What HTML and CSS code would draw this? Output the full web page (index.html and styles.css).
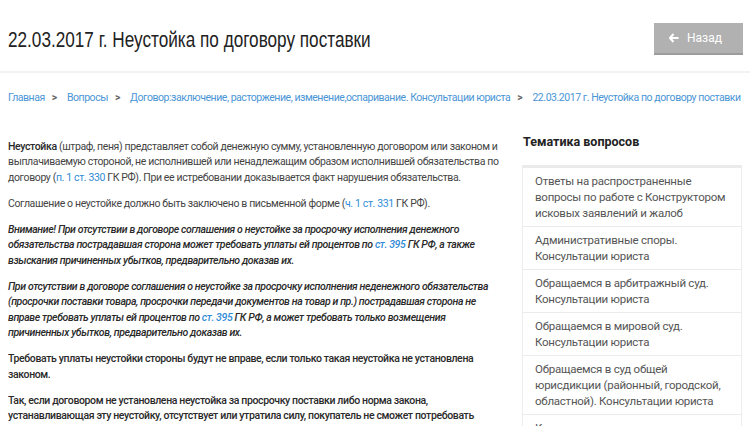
FILE: index.html
```html
<!DOCTYPE html>
<html lang="ru">
<head>
  <meta charset="UTF-8" />
  <meta name="viewport" content="width=device-width, initial-scale=1.0" />
  <title>22.03.2017 г. Неустойка по договору поставки</title>
  <link rel="stylesheet" href="styles.css">
</head>
<body>
  <!-- шапка -->
  <header class="page-header">
    <h1 class="page-title">22.03.2017 г. Неустойка по договору поставки</h1>
    <a href="#" class="back-btn">
      <svg class="back-icon" width="10" height="10" viewBox="0 0 10 10"><path d="M4.5 1L1 5l3.5 4M1 5h8.5" fill="none" stroke="#fff" stroke-width="2"/></svg>
      <span>Назад</span>
    </a>
  </header>

  <nav class="breadcrumbs">
    <a href="#">Главная</a><span class="sep">&gt;</span>
    <a href="#">Вопросы</a><span class="sep">&gt;</span>
    <a href="#">Договор:заключение, расторжение, изменение,оспаривание. Консультации юриста</a><span class="sep">&gt;</span>
    <a href="#">22.03.2017 г. Неустойка по договору поставки</a>
  </nav>

  <div class="layout">
    <article class="content">
      <p><b>Неустойка</b> (штраф, пеня) представляет собой денежную сумму, установленную договором или законом и выплачиваемую стороной, не исполнившей или ненадлежащим образом исполнившей обязательства по договору (<a href="#">п. 1 ст. 330</a> ГК РФ). При ее истребовании доказывается факт нарушения обязательства.</p>
      <p>Соглашение о неустойке должно быть заключено в письменной форме (<a href="#">ч. 1 ст. 331</a> ГК РФ).</p>
      <p class="note"><b><i>Внимание! При отсутствии в договоре соглашения о неустойке за просрочку исполнения денежного обязательства пострадавшая сторона может требовать уплаты ей процентов по <a href="#">ст. 395</a> ГК РФ, а также взыскания причиненных убытков, предварительно доказав их.</i></b></p>
      <p class="note"><b><i>При отсутствии в договоре соглашения о неустойке за просрочку исполнения неденежного обязательства (просрочки поставки товара, просрочки передачи документов на товар и пр.) пострадавшая сторона не вправе требовать уплаты ей процентов по <a href="#">ст. 395</a> ГК РФ, а может требовать только возмещения причиненных убытков, предварительно доказав их.</i></b></p>
      <p><b>Требовать уплаты неустойки стороны будут не вправе, если только такая неустойка не установлена законом.</b></p>
      <p><b>Так, если договором не установлена неустойка за просрочку поставки либо норма закона, устанавливающая эту неустойку, отсутствует или утратила силу, покупатель не сможет потребовать уплаты неустойки.</b></p>
    </article>

    <aside class="sidebar">
      <h3 class="sidebar-title">Тематика вопросов</h3>
      <ul class="topic-list">
        <li><a href="#">Ответы на распространенные вопросы по работе с Конструктором исковых заявлений и жалоб</a></li>
        <li><a href="#">Административные споры. Консультации юриста</a></li>
        <li><a href="#">Обращаемся в арбитражный суд. Консультации юриста</a></li>
        <li><a href="#">Обращаемся в мировой суд. Консультации юриста</a></li>
        <li><a href="#">Обращаемся в суд общей юрисдикции (районный, городской, областной). Консультации юриста</a></li>
        <li><a href="#">Калькуляторы госпошлины, пени</a></li>
      </ul>
    </aside>
  </div>
</body>
</html>
```

FILE: styles.css
```css
:root {
  --text-color: #444;
  --strong-color: #2a2a2a;
  --muted-color: #555;
  --link-color: #2f8bd6;
  --crumb-color: #4a95d6;
  --border-color: #ececec;
}
* {
  box-sizing: border-box;
  margin: 0;
  padding: 0;
}
body {
  font-family: Roboto, 'Liberation Sans', sans-serif;
  color: var(--text-color);
  background: #fff;
  overflow: hidden;
}
a {
  color: var(--link-color);
  text-decoration: none;
}
.page-header {
  display: flex;
  justify-content: space-between;
  align-items: center;
  height: 73px;
  padding: 0 8px;
  border-bottom: 2px solid #f2f2f2;
}
.page-title {
  font-family: 'Liberation Sans', sans-serif;
  font-weight: normal;
  font-size: 22px;
  color: #222;
  padding-top: 8px;
  transform: scaleX(0.78);
  transform-origin: left center;
  white-space: nowrap;
}
.back-btn {
  display: flex;
  align-items: center;
  gap: 8px;
  width: 89px;
  height: 32px;
  padding-left: 15px;
  margin-right: -1px;
  margin-top: 7px;
  background: #b1b1b1;
  border-bottom: 2px solid #9c9c9c;
  color: #fff;
  font-size: 12px;
}
.breadcrumbs {
  padding: 18px 8px 0;
  height: 60px;
  font-size: 10.5px;
  letter-spacing: -0.45px;
  white-space: nowrap;
}
.breadcrumbs a {
  color: var(--crumb-color);
}
.breadcrumbs .sep {
  color: #666;
  margin: 0 8px 0 7px;
  font-weight: bold;
}
/* видимая часть страницы обрезается как на снимке */
.layout {
  display: flex;
  gap: 22px;
  padding: 0 8px;
  height: 293px;
  overflow: hidden;
}
.content {
  width: 492px;
  font-size: 10.5px;
  line-height: 15.3px;
  letter-spacing: -0.37px;
  padding-top: 6px;
}
.content p {
  margin-bottom: 11px;
}
.content b {
  font-weight: 500;
  color: var(--strong-color);
}
.sidebar {
  width: 220px;
  padding-top: 1px;
}
.sidebar-title {
  font-size: 12.5px;
  line-height: 16px;
  font-weight: bold;
  color: #222;
  padding: 0 1px 15px;
  border-bottom: 3px solid #ebebeb;
}
.topic-list {
  list-style: none;
  border-left: 1px solid var(--border-color);
  border-right: 1px solid var(--border-color);
}
.topic-list li {
  padding: 5px 14px 5px 12px;
  border-bottom: 1px solid var(--border-color);
  font-size: 11.5px;
  line-height: 16px;
  letter-spacing: -0.25px;
}
.topic-list a {
  color: var(--muted-color);
}
```
